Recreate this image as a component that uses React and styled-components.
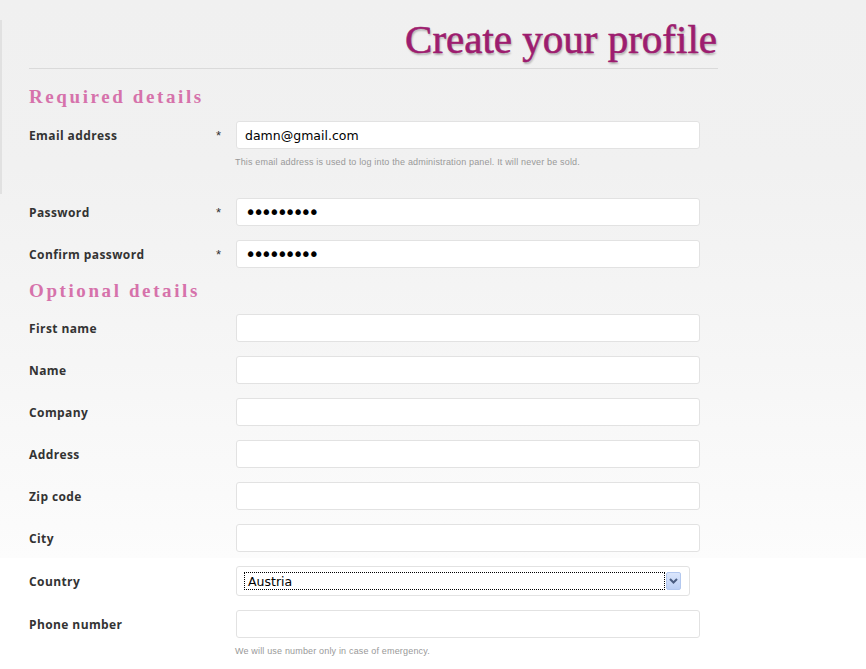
import React from "react";
import styled, { createGlobalStyle } from "styled-components";

const GlobalStyle = createGlobalStyle`
  html, body {
    margin: 0;
    padding: 0;
    background: #ffffff;
  }
  body {
    font-family: "Open Sans", "Liberation Sans", sans-serif;
    color: #333;
  }
  * { box-sizing: border-box; }
`;

const Page = styled.div`
  display: flex;
  align-items: flex-start;
  min-height: 669px;
  background: linear-gradient(to bottom, #f0f0f0 0%, #f1f1f1 30%, #f6f6f6 65%, #fcfcfc 100%) no-repeat;
  background-size: 100% 558px;
`;

const EdgeTab = styled.div`
  flex: none;
  width: 2px;
  height: 174px;
  margin-top: 20px;
  background: #e1e1e1;
`;

const Main = styled.main`
  flex: none;
  width: 689px;
  margin-left: 27px;
`;

const Header = styled.header`
  display: flex;
  justify-content: flex-end;
  align-items: flex-end;
  height: 69px;
  padding-bottom: 8px;
  border-bottom: 1px solid #dadada;
`;

const Title = styled.h1`
  margin: 0;
  padding-right: 1px;
  font-family: "Liberation Serif", "Times New Roman", serif;
  font-weight: normal;
  font-size: 41px;
  line-height: 41px;
  color: #9d1d6f;
  -webkit-text-stroke: 0.6px #9d1d6f;
  text-shadow: 1px 2px 2px rgba(0, 0, 0, 0.28);
`;

const Section = styled.section`
  margin-top: ${(p) => p.$top}px;
`;

const SectionTitle = styled.h2`
  margin: 0 0 ${(p) => p.$gap}px;
  font-family: "Liberation Serif", "Times New Roman", serif;
  font-weight: bold;
  font-size: 19px;
  line-height: 24px;
  letter-spacing: 2.6px;
  color: #d672ab;
`;

const FieldList = styled.div`
  display: flex;
  flex-direction: column;
  gap: 14px;
`;

const Field = styled.div`
  display: grid;
  grid-template-columns: 187px 20px 464px;
  align-items: center;
`;

const Label = styled.label`
  font-family: "Open Sans", "Liberation Sans", sans-serif;
  font-weight: bold;
  font-size: 12px;
  letter-spacing: 0.4px;
  color: #333;
`;

const Required = styled.span`
  font-family: "Liberation Sans", sans-serif;
  font-size: 13px;
  color: #333;
`;

const TextInput = styled.input`
  grid-column: 3;
  width: 464px;
  height: 28px;
  margin: 0;
  padding: 0 8px;
  border: 1px solid #e2e2e2;
  border-radius: 3px;
  background: #fff;
  font-family: "DejaVu Sans", Verdana, sans-serif;
  font-size: ${(p) => (p.type === "password" ? "19px" : "12.5px")};
  letter-spacing: ${(p) => (p.type === "password" ? "-3.3px" : "0")};
  color: #000;
  outline: none;
`;

const Hint = styled.p`
  grid-column: 3;
  margin: 7px 0 ${(p) => p.$after}px -1px;
  font-family: "Liberation Sans", Arial, sans-serif;
  font-size: 9px;
  line-height: 12px;
  letter-spacing: 0.17px;
  color: #999;
`;

const SelectBox = styled.div`
  grid-column: 3;
  display: flex;
  align-items: stretch;
  width: 454px;
  height: 30px;
  padding: 5px 8px 5px 7px;
  border: 1px solid #e2e2e2;
  border-radius: 3px;
  background: #fff;
`;

const SelectValue = styled.div`
  flex: 1;
  display: flex;
  align-items: center;
  padding-left: 3px;
  border: 1px dotted #000;
  font-family: "DejaVu Sans", Verdana, sans-serif;
  font-size: 12.5px;
  color: #000;
`;

const SelectArrow = styled.div`
  flex: none;
  width: 15px;
  margin-left: 1px;
  display: flex;
  align-items: center;
  justify-content: center;
  border: 1px solid #b3c8ef;
  border-radius: 2px;
  background: linear-gradient(to bottom, #dbe6fc, #bcd0f6);
`;

const Chevron = () => (
  <svg width="9" height="6" viewBox="0 0 9 6">
    <path d="M1 1 L4.5 4.5 L8 1" fill="none" stroke="#4a5d82" strokeWidth="2" />
  </svg>
);

const required = [
  {
    id: "email",
    label: "Email address",
    type: "text",
    value: "damn@gmail.com",
    hint: "This email address is used to log into the administration panel. It will never be sold.",
  },
  { id: "password", label: "Password", type: "password", value: "secret123" },
  { id: "confirm", label: "Confirm password", type: "password", value: "secret123" },
];

const optional = [
  { id: "first", label: "First name" },
  { id: "name", label: "Name" },
  { id: "company", label: "Company" },
  { id: "address", label: "Address" },
  { id: "zip", label: "Zip code" },
  { id: "city", label: "City" },
  { id: "country", label: "Country", select: "Austria" },
  {
    id: "phone",
    label: "Phone number",
    hint: "We will use number only in case of emergency.",
  },
];

function FormField({ field, isRequired }) {
  return (
    <Field>
      <Label htmlFor={field.id}>{field.label}</Label>
      {isRequired ? <Required>*</Required> : <span />}
      {field.select ? (
        <SelectBox id={field.id} role="combobox" aria-label={field.label}>
          <SelectValue>{field.select}</SelectValue>
          <SelectArrow>
            <Chevron />
          </SelectArrow>
        </SelectBox>
      ) : (
        <TextInput
          id={field.id}
          type={field.type || "text"}
          defaultValue={field.value || ""}
          readOnly
        />
      )}
      {field.hint && <Hint $after={field.id === "email" ? 16 : 0}>{field.hint}</Hint>}
    </Field>
  );
}

export default function App() {
  return (
    <>
      <GlobalStyle />
      <Page>
        <EdgeTab />
        <Main>
          <Header>
            <Title>Create your profile</Title>
          </Header>
          <Section $top={16}>
            <SectionTitle $gap={12}>Required details</SectionTitle>
            <FieldList>
              {required.map((f) => (
                <FormField key={f.id} field={f} isRequired />
              ))}
            </FieldList>
          </Section>
          <Section $top={11}>
            <SectionTitle $gap={11}>Optional details</SectionTitle>
            <FieldList>
              {optional.map((f) => (
                <FormField key={f.id} field={f} />
              ))}
            </FieldList>
          </Section>
        </Main>
      </Page>
    </>
  );
}
